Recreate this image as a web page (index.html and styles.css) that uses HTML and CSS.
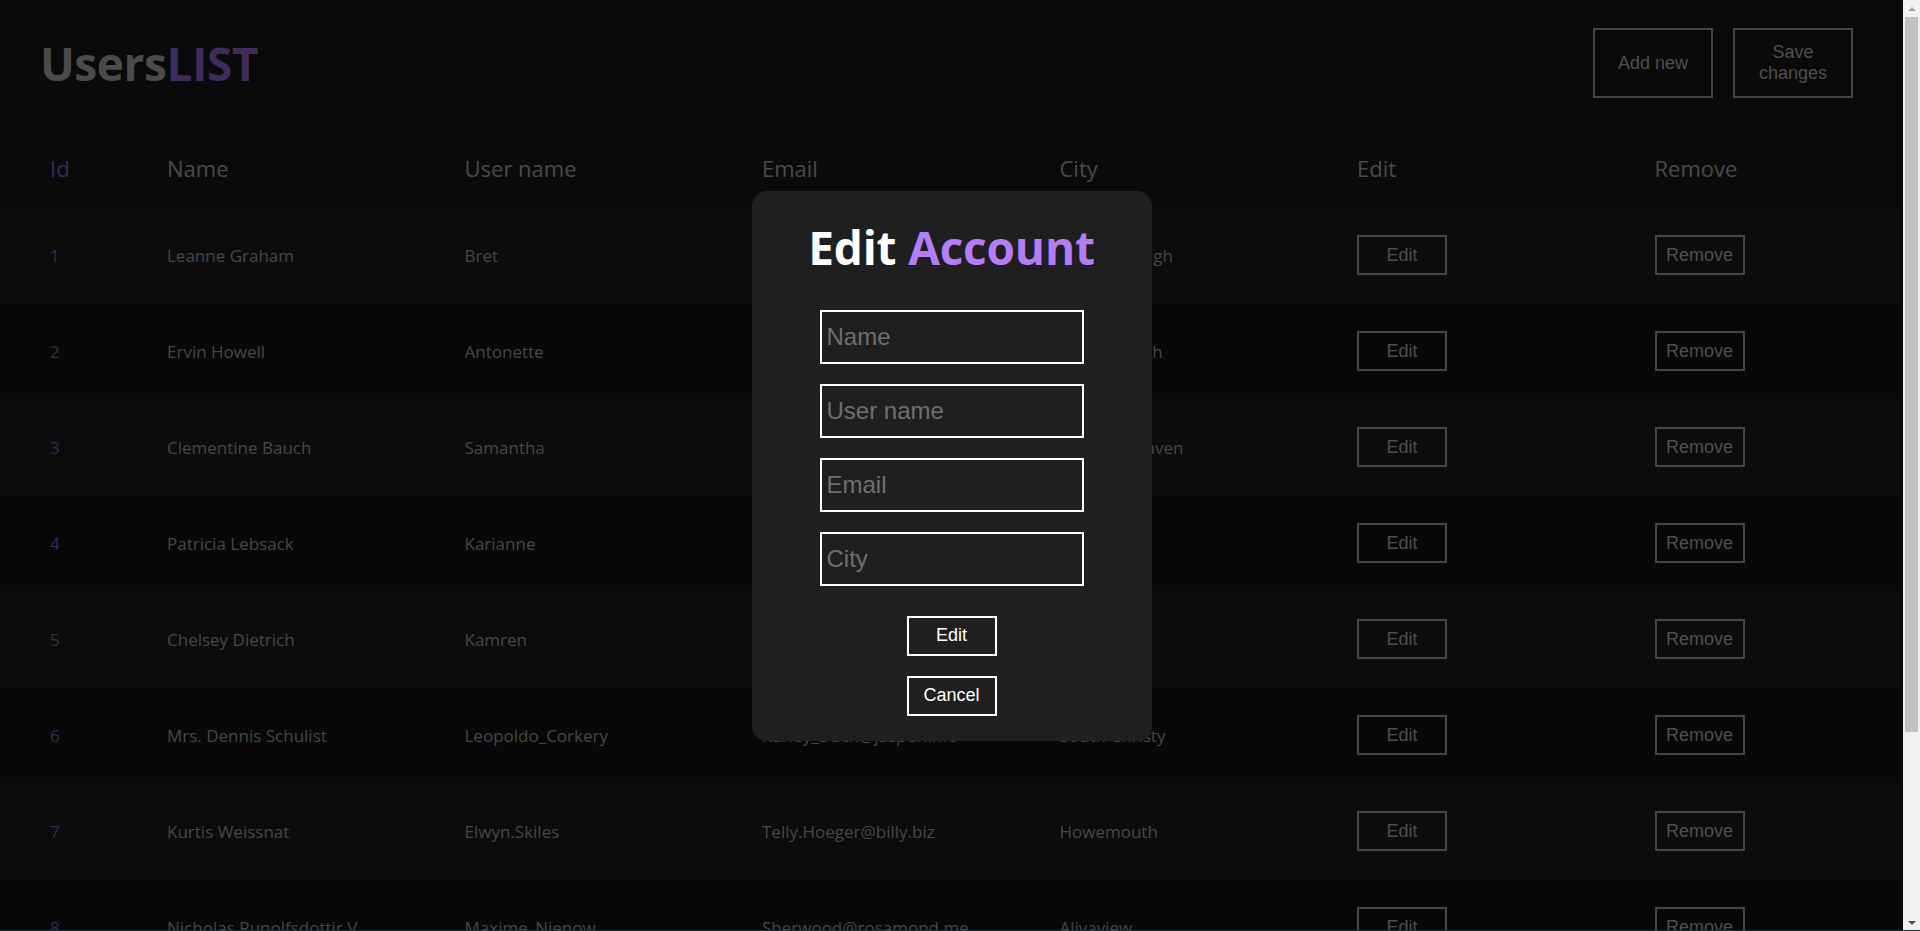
FILE: index.html
```html
<!DOCTYPE html>
<html lang="en">
<head>
<meta charset="utf-8">
<title>UsersLIST</title>
<link rel="stylesheet" href="styles.css">
</head>
<body>
<div class="app">
  <header class="topbar">
    <h1 class="logo">Users<span class="logo-accent">LIST</span></h1>
    <div class="actions">
      <button class="btn-top" type="button">Add new</button>
      <button class="btn-top" type="button">Save changes</button>
    </div>
  </header>

  <table class="users">
    <colgroup>
      <col class="c-id"><col class="c-wide"><col class="c-wide"><col class="c-wide"><col class="c-wide"><col class="c-wide"><col>
    </colgroup>
    <thead>
      <tr><th class="id">Id</th><th>Name</th><th>User name</th><th>Email</th><th>City</th><th>Edit</th><th>Remove</th></tr>
    </thead>
    <tbody>
      <tr><td class="id">1</td><td>Leanne Graham</td><td>Bret</td><td>Sincere@april.biz</td><td>Gwenborough</td><td><button class="btn-row" type="button">Edit</button></td><td><button class="btn-row" type="button">Remove</button></td></tr>
      <tr><td class="id">2</td><td>Ervin Howell</td><td>Antonette</td><td>Shanna@melissa.tv</td><td>Wisokyburgh</td><td><button class="btn-row" type="button">Edit</button></td><td><button class="btn-row" type="button">Remove</button></td></tr>
      <tr><td class="id">3</td><td>Clementine Bauch</td><td>Samantha</td><td>Nathan@yesenia.net</td><td>McKenziehaven</td><td><button class="btn-row" type="button">Edit</button></td><td><button class="btn-row" type="button">Remove</button></td></tr>
      <tr><td class="id">4</td><td>Patricia Lebsack</td><td>Karianne</td><td>Julianne.OConner@kory.org</td><td>South Elvis</td><td><button class="btn-row" type="button">Edit</button></td><td><button class="btn-row" type="button">Remove</button></td></tr>
      <tr><td class="id">5</td><td>Chelsey Dietrich</td><td>Kamren</td><td>Lucio_Hettinger@annie.ca</td><td>Roscoeview</td><td><button class="btn-row" type="button">Edit</button></td><td><button class="btn-row" type="button">Remove</button></td></tr>
      <tr><td class="id">6</td><td>Mrs. Dennis Schulist</td><td>Leopoldo_Corkery</td><td>Karley_Dach@jasper.info</td><td>South Christy</td><td><button class="btn-row" type="button">Edit</button></td><td><button class="btn-row" type="button">Remove</button></td></tr>
      <tr><td class="id">7</td><td>Kurtis Weissnat</td><td>Elwyn.Skiles</td><td>Telly.Hoeger@billy.biz</td><td>Howemouth</td><td><button class="btn-row" type="button">Edit</button></td><td><button class="btn-row" type="button">Remove</button></td></tr>
      <tr><td class="id">8</td><td>Nicholas Runolfsdottir V</td><td>Maxime_Nienow</td><td>Sherwood@rosamond.me</td><td>Aliyaview</td><td><button class="btn-row" type="button">Edit</button></td><td><button class="btn-row" type="button">Remove</button></td></tr>
      <tr><td class="id">9</td><td>Glenna Reichert</td><td>Delphine</td><td>Chaim_McDermott@dana.io</td><td>Bartholomebury</td><td><button class="btn-row" type="button">Edit</button></td><td><button class="btn-row" type="button">Remove</button></td></tr>
      <tr><td class="id">10</td><td>Clementina DuBuque</td><td>Moriah.Stanton</td><td>Rey.Padberg@karina.biz</td><td>Lebsackbury</td><td><button class="btn-row" type="button">Edit</button></td><td><button class="btn-row" type="button">Remove</button></td></tr>
    </tbody>
  </table>
</div>

<div class="scrollbar" aria-hidden="true">
  <div class="sb-btn"><span class="sb-arrow-up"></span></div>
  <div class="sb-track"><div class="sb-thumb"></div></div>
  <div class="sb-btn"><span class="sb-arrow-down"></span></div>
</div>

<div class="backdrop">
  <form class="modal">
    <h2 class="modal-title">Edit <span class="modal-accent">Account</span></h2>
    <input class="field" type="text" placeholder="Name">
    <input class="field" type="text" placeholder="User name">
    <input class="field" type="text" placeholder="Email">
    <input class="field" type="text" placeholder="City">
    <button class="btn-modal btn-first" type="button">Edit</button>
    <button class="btn-modal" type="button">Cancel</button>
  </form>
</div>
<div class="edge"></div>
</body>
</html>
```

FILE: styles.css
```css
html {
  background: #0a0a0a;
}

body {
  margin: 0;
  height: 100vh;
  overflow: hidden;
  display: flex;
  font-family: "Open Sans", "Noto Sans", sans-serif;
  color: #464646;
}

.app {
  flex: 1;
  min-width: 0;
  overflow: hidden;
}

/* fake classic scrollbar */
.scrollbar {
  flex: none;
  width: 17px;
  display: flex;
  flex-direction: column;
  background: #f1f1f1;
}

.sb-btn {
  height: 17px;
  flex: none;
  display: flex;
  align-items: center;
  justify-content: center;
}

.sb-arrow-up {
  width: 0;
  height: 0;
  border-left: 4px solid transparent;
  border-right: 4px solid transparent;
  border-bottom: 4px solid #a3a3a3;
}

.sb-arrow-down {
  width: 0;
  height: 0;
  border-left: 4px solid transparent;
  border-right: 4px solid transparent;
  border-top: 4px solid #505050;
}

.sb-track {
  flex: 1;
  padding: 0 2px;
}

.sb-thumb {
  height: 715px;
  background: #c1c1c1;
}

.topbar {
  display: flex;
  align-items: center;
  justify-content: space-between;
  height: 70px;
  padding: 28px 50px 0 40px;
  margin-bottom: 31px;
}

.logo {
  margin: 0;
  font-size: 46px;
  font-weight: 700;
  color: #4b4b4b;
  letter-spacing: -0.4px;
}

.logo-accent {
  color: #3f2c5d;
}

.actions {
  display: flex;
  gap: 20px;
}

.btn-top {
  width: 120px;
  height: 70px;
  padding: 0 12px;
  background: transparent;
  border: 2px solid #454545;
  color: #4f4f4f;
  font-family: "Liberation Sans", Arial, sans-serif;
  font-size: 18px;
}

.users {
  width: 100%;
  border-collapse: collapse;
  table-layout: fixed;
}

.c-id {
  width: 167px;
}

.c-wide {
  width: 297.5px;
}

.users th,
.users td {
  padding: 0;
  text-align: left;
  vertical-align: middle;
  white-space: nowrap;
  overflow: hidden;
}

.users th {
  height: 78px;
  font-size: 22px;
  font-weight: 400;
  color: #4a4a4a;
}

.users td {
  height: 96px;
  font-size: 17px;
  color: #474747;
}

.users .id {
  padding-left: 50px;
  color: #392a58;
}

.users tbody tr:nth-child(odd) {
  background: #0c0c0c;
}

.users tbody tr:nth-child(even) {
  background: #080808;
}

.btn-row {
  width: 90px;
  height: 40px;
  padding: 0;
  background: transparent;
  border: 2px solid #474747;
  color: #4f4f4f;
  font-family: "Liberation Sans", Arial, sans-serif;
  font-size: 18px;
}

.backdrop {
  position: fixed;
  top: 0;
  left: 0;
  right: 17px;
  bottom: 0;
  display: flex;
  align-items: center;
  justify-content: center;
}

.modal {
  width: 400px;
  box-sizing: border-box;
  padding: 26px 0 25px;
  display: flex;
  flex-direction: column;
  align-items: center;
  background: #1f1f1f;
  border-radius: 15px;
}

.modal-title {
  margin: 0 0 33px;
  font-size: 46px;
  line-height: 60px;
  font-weight: 700;
  color: #ffffff;
  letter-spacing: -0.2px;
}

.modal-accent {
  color: #b47cf7;
}

.field {
  box-sizing: border-box;
  width: 264px;
  height: 54px;
  margin: 0 0 20px;
  padding: 0 5px;
  background: #1f1f1f;
  border: 2px solid #ffffff;
  border-radius: 0;
  outline: none;
  color: #ffffff;
  font-family: "Liberation Sans", Arial, sans-serif;
  font-size: 24px;
}

.field::placeholder {
  color: #6f6f6f;
}

.btn-modal {
  box-sizing: border-box;
  width: 90px;
  height: 40px;
  padding: 0;
  background: #1f1f1f;
  border: 2px solid #ffffff;
  color: #ffffff;
  font-family: "Liberation Sans", Arial, sans-serif;
  font-size: 18px;
}

.btn-first {
  margin: 10px 0 20px;
}

.edge {
  position: fixed;
  left: 0;
  right: 0;
  bottom: 0;
  height: 1px;
  background: #1b3142;
}
```
